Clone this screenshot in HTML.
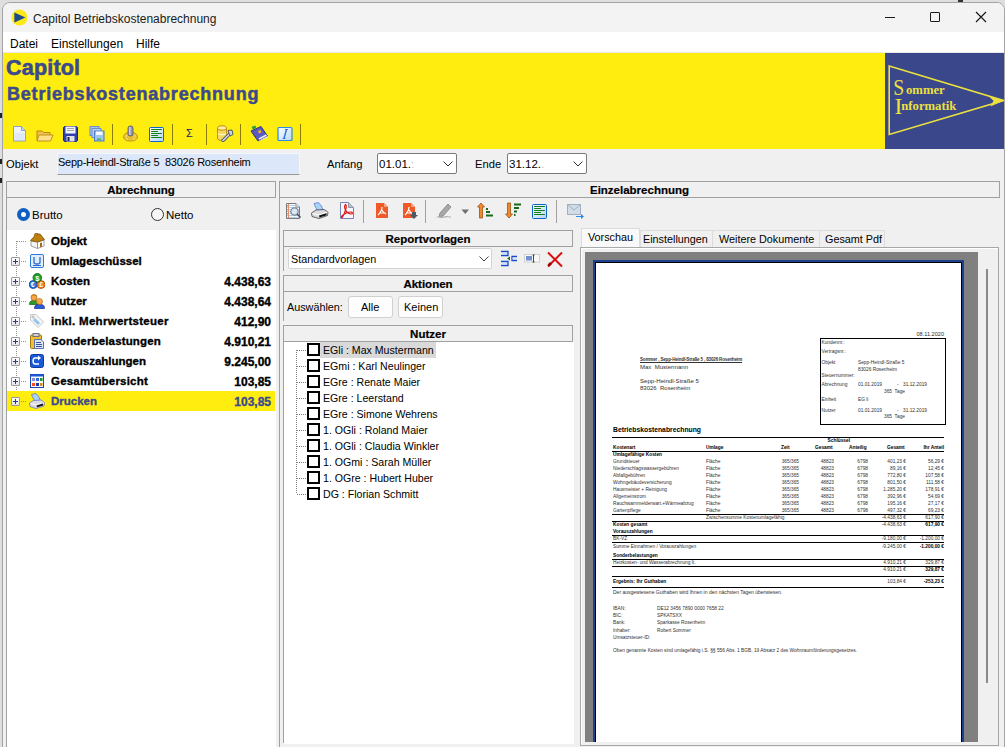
<!DOCTYPE html>
<html><head><meta charset="utf-8">
<style>
*{box-sizing:border-box;margin:0;padding:0}
html,body{width:1005px;height:747px;overflow:hidden;font-family:"Liberation Sans",sans-serif;font-size:11px;color:#000}
body{position:relative;background:#dedede}
.a{position:absolute}
.t{position:absolute;white-space:nowrap;line-height:1;margin-top:0.7px}
#frame{left:2px;top:2px;width:1003px;height:760px;background:#f0f0f0;border:1px solid #a4a4a4;border-radius:8px 8px 0 0}
.hdr{position:absolute;background:#f0f0f0;border:1px solid #a0a0a0;font-weight:bold;text-align:center;line-height:16px;font-size:11.5px;-webkit-text-stroke:0.2px #000}
.vl{position:absolute;width:1px;background:#a0a0a0}
.hl{position:absolute;height:1px;background:#a0a0a0}
.sep{position:absolute;width:1px;background:#8a7a00;top:124px;height:21px}
.sep2{position:absolute;width:1px;background:#a0a0a0;top:200px;height:23px}
</style></head><body>
<div id="frame" class="a"></div>
<div class="a" style="left:0;top:113px;width:2px;height:5px;background:#222"></div>
<div class="a" style="left:0;top:159px;width:2px;height:5px;background:#222"></div>
<div class="a" style="left:0;top:178px;width:2px;height:5px;background:#222"></div>
<div class="a" style="left:958px;top:0;width:5px;height:2px;background:#333"></div>


<!-- TITLE BAR -->
<div class="a" style="left:3px;top:3px;width:1001px;height:29px;background:#f3f3f3;border-radius:7px 7px 0 0"></div>
<svg class="a" style="left:11px;top:9px" width="17" height="17" viewBox="0 0 17 17"><circle cx="8.5" cy="8.5" r="8" fill="#ffe81a"/><path d="M3.3 3.6 L14.5 8.5 L3.3 13.4 Z" fill="#1d4c8c"/></svg>
<div class="t" style="left:33px;top:12px;font-size:12px;color:#1a1a1a">Capitol Betriebskostenabrechnung</div>
<div class="a" style="left:885px;top:17px;width:10px;height:1px;background:#1a1a1a"></div>
<div class="a" style="left:930px;top:12px;width:10px;height:10px;border:1px solid #1a1a1a;border-radius:1px"></div>
<svg class="a" style="left:975px;top:11px" width="12" height="12" viewBox="0 0 12 12"><path d="M1 1 L11 11 M11 1 L1 11" stroke="#1a1a1a" stroke-width="1.2"/></svg>

<!-- MENU -->
<div class="a" style="left:3px;top:32px;width:1001px;height:20px;background:#fff"></div>
<div class="a" style="left:3px;top:52px;width:1001px;height:1px;background:#e8e8e8"></div>
<div class="t" style="left:10px;top:37px;font-size:12px">Datei</div>
<div class="t" style="left:51px;top:37px;font-size:12px">Einstellungen</div>
<div class="t" style="left:136px;top:37px;font-size:12px">Hilfe</div>

<!-- YELLOW HEADER -->
<div class="a" style="left:3px;top:53px;width:882px;height:96px;background:#ffed10"></div>
<div class="t" style="left:6px;top:57px;font-size:21.5px;font-weight:bold;color:#3b4a8c;-webkit-text-stroke:0.6px #3b4a8c;letter-spacing:0.2px">Capitol</div>
<div class="t" style="left:7px;top:84px;font-size:18px;font-weight:bold;letter-spacing:0.8px;color:#3b4a8c;-webkit-text-stroke:0.5px #3b4a8c">Betriebskostenabrechnung</div>

<!-- LOGO -->
<div class="a" style="left:885px;top:53px;width:119px;height:96px;background:#3a478a"></div>
<svg class="a" style="left:886px;top:53px" width="118" height="96" viewBox="0 0 118 96">
 <path d="M3.2 13.1 L117.5 47.5 L3.2 81.5 Z" fill="none" stroke="#ece040" stroke-width="1.6" stroke-linejoin="miter"/>
 <path d="M118 47.5 L103 43.5 L107.5 47.8 L104.5 53.5 Z" fill="#ece040"/>
 <text x="7.2" y="42.4" font-family="Liberation Serif" font-size="23.5" textLength="11" lengthAdjust="spacingAndGlyphs" fill="#ece040">S</text>
 <text x="20" y="41.2" font-family="Liberation Serif" font-size="12.7" font-weight="bold" fill="#ece040">ommer</text>
 <text x="8.4" y="61.3" font-family="Liberation Serif" font-size="23.5" fill="#ece040">I</text>
 <text x="15.3" y="56.8" font-family="Liberation Serif" font-size="12.7" font-weight="bold" fill="#ece040">nformatik</text>
</svg>

<!-- TOOLBAR ICONS (yellow) -->

<svg class="a" style="left:12px;top:125px" width="16" height="17" viewBox="0 0 16 17"><path d="M1.5 1.5 H9.5 L13.5 5.5 V16 H1.5 Z" fill="#eef3fb" stroke="#8da0c0"/><path d="M9.5 1.5 V5.5 H13.5" fill="#c8d4e8" stroke="#8da0c0"/><path d="M2.5 8 H12.5 V15 H2.5Z" fill="#dfe8f6"/></svg>
<svg class="a" style="left:36px;top:129px" width="18" height="13" viewBox="0 0 18 13"><path d="M1 2 H6 L7.5 3.5 H14 V11.5 H1 Z" fill="#f2c14e" stroke="#b8860b"/><path d="M3 6 H17 L14.5 12 H1 Z" fill="#ffe08a" stroke="#c0921a"/></svg>
<svg class="a" style="left:63px;top:126px" width="15" height="16" viewBox="0 0 15 16"><path d="M1.5 0.5 H13.5 L14.5 1.5 V14.5 L13.5 15.5 H1.5 L0.5 14.5 V1.5 Z" fill="#3040b0" stroke="#1c2478"/><rect x="2.5" y="0.5" width="10" height="7" fill="#f4f6fa"/><path d="M4 2.5 H11 M4 4.5 H11" stroke="#a0a4b0"/><rect x="3.5" y="10" width="8" height="5.5" fill="#e0e0e4"/><rect x="4.5" y="11" width="2" height="4" fill="#182060"/></svg>
<svg class="a" style="left:89px;top:126px" width="16" height="16" viewBox="0 0 16 16"><rect x="1" y="0.5" width="9" height="9" fill="#a8c4ec" stroke="#6f8fc8"/><rect x="3" y="2.5" width="9" height="9" fill="#b8d0f0" stroke="#6f8fc8"/><rect x="5.5" y="5" width="9.5" height="10" fill="#a0c4f0" stroke="#4a7ac8"/><rect x="7" y="5.5" width="6.5" height="3.5" fill="#f4f8fc"/><rect x="8" y="12.5" width="4" height="1.5" fill="#50b050"/></svg>
<div class="sep" style="left:112px"></div>
<svg class="a" style="left:122px;top:125px" width="17" height="17" viewBox="0 0 17 17"><path d="M2 10 L4 8 L7 7.5 L10 7.5 L13 8 L15 10 L15.5 13 L13 15.5 L10 16 L7 16 L4 15.5 L1.5 13 Z" fill="#e8c030" stroke="#b89010" stroke-width="0.8"/><path d="M4 13 L6 15 M11 15 L13 13 M3 11 H5 M12 11 H14" stroke="#fff0a0" stroke-width="0.8"/><rect x="6" y="1" width="5" height="10" rx="2.2" fill="#9898a8" stroke="#505060" stroke-width="0.8"/><rect x="7" y="2" width="1.5" height="8" fill="#d0d0dc"/></svg>
<svg class="a" style="left:148px;top:126px" width="17" height="17" viewBox="0 0 17 17"><defs><linearGradient id="lg148" x1="0" y1="0" x2="1" y2="1"><stop offset="0" stop-color="#fff"/><stop offset="1" stop-color="#b4d4f8"/></linearGradient></defs><rect x="1.5" y="1.5" width="14" height="14" rx="1" fill="url(#lg148)" stroke="#0a64d0"/><path d="M3.5 3.5H13.5M3.5 7.5H13.5M3.5 11.5H13.5" stroke="#108010" stroke-width="1.1" stroke-linecap="round"/><path d="M3.5 5.5H9.5M3.5 9.5H9.5" stroke="#108010" stroke-width="1.1" stroke-linecap="round"/></svg>
<div class="sep" style="left:172px"></div>
<div class="t" style="left:186px;top:127px;font-size:11px;color:#1a2060">&Sigma;</div>
<div class="sep" style="left:206px"></div>
<svg class="a" style="left:216px;top:125px" width="18" height="17" viewBox="0 0 18 17"><path d="M1.5 3 V13.5 C1.5 16 10.5 16 10.5 13.5 V3" fill="#f4d860" stroke="#c08a10"/><ellipse cx="6" cy="3" rx="4.5" ry="2.2" fill="#fff0a0" stroke="#c08a10"/><path d="M2 8.5 C2 10 10 10 10 8.5" fill="none" stroke="#fff8d0" stroke-width="1.2"/><path d="M7 15.5 L14.5 8" stroke="#505860" stroke-width="3.2" stroke-linecap="round"/><path d="M7 15.5 L14.5 8" stroke="#d8dce4" stroke-width="1.6" stroke-linecap="round"/><path d="M12 5.5 L16 5 L17 9.5 L14 11 Z" fill="#d0d4dc" stroke="#505860"/></svg>
<div class="sep" style="left:240px"></div>
<svg class="a" style="left:250px;top:125px" width="18" height="17" viewBox="0 0 18 17"><path d="M1 6 L11 1.5 L17.5 11 L8 16 Z" fill="#5a5ac0" stroke="#30307a"/><path d="M8 16 L17.5 11 L17 13 L8.5 16 Z" fill="#e0e0e8"/><path d="M9 14 L16.5 10" stroke="#f0f0f4" stroke-width="1.5"/><rect x="2" y="1" width="4" height="3" fill="#30a030" transform="rotate(-20 4 2.5)"/><path d="M8 6 L10.5 5 L11.5 7.5 L9 8.5 Z" fill="#f0b020"/></svg>
<svg class="a" style="left:277px;top:126px" width="16" height="15" viewBox="0 0 16 15"><defs><linearGradient id="ig" x1="0" y1="0" x2="1" y2="1"><stop offset="0" stop-color="#ffffff"/><stop offset="1" stop-color="#b8d8f8"/></linearGradient></defs><rect x="1" y="1.5" width="14" height="13" rx="1" fill="url(#ig)" stroke="#2a8ae8" stroke-width="1.2"/><path d="M9.5 3.5 L7 12.5" stroke="#3070d8" stroke-width="1.4"/><path d="M8 3.5 H11 M5.5 12.5 H8.5" stroke="#3070d8" stroke-width="0.9"/></svg>
<div class="sep" style="left:300px"></div>


<!-- OBJEKT ROW -->
<div class="t" style="left:6px;top:158px;font-size:11.2px">Objekt</div>
<div class="a" style="left:57px;top:153px;width:243px;height:22px;background:#dce8f9;border:1px solid #f4f8fc;border-bottom:1px solid #9a9a9a"></div>
<div class="t" style="left:58px;top:156px;font-size:11px;letter-spacing:-0.25px">Sepp-Heindl-Straße 5&nbsp; 83026 Rosenheim</div>
<div class="t" style="left:327px;top:158px;font-size:11.2px">Anfang</div>
<div class="a" style="left:377px;top:153px;width:80px;height:21px;background:#fff;border:1px solid #7a7a7a;border-radius:2px"></div>
<div class="t" style="left:379px;top:158px;font-size:11.5px">01.01.<span style="color:#bbb">:</span></div>
<svg class="a" style="left:443px;top:161px" width="10" height="6"><path d="M0.5 0.5 L5 5 L9.5 0.5" fill="none" stroke="#333" stroke-width="1"/></svg>
<div class="t" style="left:475px;top:158px;font-size:11.2px">Ende</div>
<div class="a" style="left:507px;top:153px;width:80px;height:21px;background:#fff;border:1px solid #7a7a7a;border-radius:2px"></div>
<div class="t" style="left:509px;top:158px;font-size:11.5px">31.12.<span style="color:#bbb">.</span></div>
<svg class="a" style="left:573px;top:161px" width="10" height="6"><path d="M0.5 0.5 L5 5 L9.5 0.5" fill="none" stroke="#333" stroke-width="1"/></svg>

<!-- LEFT PANEL -->
<div class="hdr" style="left:6px;top:181px;width:270px;height:17px">Abrechnung</div>
<div class="vl" style="left:6px;top:197px;height:550px"></div>
<div class="a" style="left:7px;top:230px;width:269px;height:517px;background:#fff"></div>
<div class="a" style="left:17px;top:208px;width:13px;height:13px;border-radius:50%;background:#0f5fc2"></div>
<div class="a" style="left:21px;top:212px;width:5px;height:5px;border-radius:50%;background:#fff"></div>
<div class="t" style="left:32px;top:209px;font-size:11.5px">Brutto</div>
<div class="a" style="left:151px;top:208px;width:13px;height:13px;border-radius:50%;border:1px solid #333;background:#f7f7f7"></div>
<div class="t" style="left:166px;top:209px;font-size:11.5px">Netto</div>
<div class="a" style="left:16px;top:241px;width:1px;height:161px;background:repeating-linear-gradient(#909090 0 1px,transparent 1px 2px)"></div>
<div class="a" style="left:7px;top:391px;width:268px;height:20px;background:#ffed10"></div>
<div class="a" style="left:17px;top:241px;width:10px;height:1px;background:repeating-linear-gradient(90deg,#909090 0 1px,transparent 1px 2px)"></div>
<svg class="a" style="left:29px;top:233px" width="16" height="16" viewBox="0 0 16 16"><path d="M2 8 L8.5 9 V15.5 L2 13 Z" fill="#f4f4f4" stroke="#8a8a8a" stroke-width="0.8"/><path d="M8.5 9 L15 7 V13 L8.5 15.5 Z" fill="#fcfcfc" stroke="#8a8a8a" stroke-width="0.8"/><path d="M1.5 7.5 L7 1.5 L11 1 L15.5 6.5 L8.5 9 Z" fill="#c08010" stroke="#7a5000" stroke-width="0.8"/><path d="M5 3 L6 0.5 H9 L8.5 2" fill="#c08010" stroke="#7a5000" stroke-width="0.6"/><path d="M11 10 L13 9.4 V13.5 L11 14.2 Z" fill="#a86a10"/></svg>
<div class="t" style="left:51px;top:235px;font-size:11.5px;font-weight:bold;color:#000;-webkit-text-stroke:0.35px #000">Objekt</div>
<div class="a" style="left:17px;top:261px;width:10px;height:1px;background:repeating-linear-gradient(90deg,#909090 0 1px,transparent 1px 2px)"></div>
<div class="a" style="left:11px;top:257px;width:9px;height:9px;border:1px solid #9a9a9a;border-radius:1px;background:linear-gradient(#fff,#e4e4e4)"></div>
<div class="a" style="left:13px;top:261px;width:5px;height:1px;background:#2a3a80"></div>
<div class="a" style="left:15px;top:259px;width:1px;height:5px;background:#2a3a80"></div>
<svg class="a" style="left:29px;top:253px" width="16" height="16" viewBox="0 0 16 16"><rect x="1.5" y="1.5" width="13" height="13" rx="1.5" fill="#e0eefc" stroke="#2a7ad8"/><path d="M5 4 V9.5 C5 11.5 11 11.5 11 9.5 V4" fill="none" stroke="#2a6ad0" stroke-width="1.3"/><path d="M4 12.5 H12" stroke="#2a6ad0"/></svg>
<div class="t" style="left:51px;top:255px;font-size:11.5px;font-weight:bold;color:#000;-webkit-text-stroke:0.35px #000">Umlageschüssel</div>
<div class="a" style="left:17px;top:281px;width:10px;height:1px;background:repeating-linear-gradient(90deg,#909090 0 1px,transparent 1px 2px)"></div>
<div class="a" style="left:11px;top:277px;width:9px;height:9px;border:1px solid #9a9a9a;border-radius:1px;background:linear-gradient(#fff,#e4e4e4)"></div>
<div class="a" style="left:13px;top:281px;width:5px;height:1px;background:#2a3a80"></div>
<div class="a" style="left:15px;top:279px;width:1px;height:5px;background:#2a3a80"></div>
<svg class="a" style="left:29px;top:273px" width="16" height="16" viewBox="0 0 16 16"><circle cx="4.2" cy="11.5" r="4" fill="#2a78e0" stroke="#0a3a9a" stroke-width="0.8"/><circle cx="12" cy="11.5" r="4" fill="#f08020" stroke="#a84a00" stroke-width="0.8"/><circle cx="8.3" cy="4.8" r="4.3" fill="#20a020" stroke="#0a600a" stroke-width="0.8"/><text x="8.3" y="7.6" font-family="Liberation Sans" font-size="7.5" font-weight="bold" fill="#fff" text-anchor="middle">$</text><text x="3.8" y="14.2" font-family="Liberation Sans" font-size="7" font-weight="bold" fill="#fff" text-anchor="middle">€</text><text x="12.3" y="14.2" font-family="Liberation Sans" font-size="7" font-weight="bold" fill="#fff" text-anchor="middle">£</text></svg>
<div class="t" style="left:51px;top:275px;font-size:11.5px;font-weight:bold;color:#000;-webkit-text-stroke:0.35px #000">Kosten</div>
<div class="t" style="right:734px;top:275px;font-size:12px;font-weight:bold;color:#000;-webkit-text-stroke:0.35px #000">4.438,63</div>
<div class="a" style="left:17px;top:301px;width:10px;height:1px;background:repeating-linear-gradient(90deg,#909090 0 1px,transparent 1px 2px)"></div>
<div class="a" style="left:11px;top:297px;width:9px;height:9px;border:1px solid #9a9a9a;border-radius:1px;background:linear-gradient(#fff,#e4e4e4)"></div>
<div class="a" style="left:13px;top:301px;width:5px;height:1px;background:#2a3a80"></div>
<div class="a" style="left:15px;top:299px;width:1px;height:5px;background:#2a3a80"></div>
<svg class="a" style="left:29px;top:293px" width="16" height="16" viewBox="0 0 16 16"><path d="M0.5 11.5 C0.5 8 2 7.5 5 7.5 C8 7.5 9.5 8 9.5 11.5 Z" fill="#2a9a2a" stroke="#106010" stroke-width="0.7"/><circle cx="5" cy="4.5" r="3" fill="#f8a848" stroke="#a86010" stroke-width="0.7"/><path d="M2 4 C2 1 8 0.5 8 4 L7 2.5 L3 2.5 Z" fill="#b87818"/><path d="M5.5 15.5 C5.5 12 7 11.5 10.5 11.5 C14 11.5 15.5 12 15.5 15.5 Z" fill="#2a5ad8" stroke="#10308a" stroke-width="0.7"/><circle cx="10.5" cy="8.5" r="3" fill="#f8a848" stroke="#a86010" stroke-width="0.7"/><path d="M7.5 8 C7.5 5 13.5 5 13.5 8 L12.5 6.5 L8.5 6.5 Z" fill="#e8c040"/></svg>
<div class="t" style="left:51px;top:295px;font-size:11.5px;font-weight:bold;color:#000;-webkit-text-stroke:0.35px #000">Nutzer</div>
<div class="t" style="right:734px;top:295px;font-size:12px;font-weight:bold;color:#000;-webkit-text-stroke:0.35px #000">4.438,64</div>
<div class="a" style="left:17px;top:321px;width:10px;height:1px;background:repeating-linear-gradient(90deg,#909090 0 1px,transparent 1px 2px)"></div>
<div class="a" style="left:11px;top:317px;width:9px;height:9px;border:1px solid #9a9a9a;border-radius:1px;background:linear-gradient(#fff,#e4e4e4)"></div>
<div class="a" style="left:13px;top:321px;width:5px;height:1px;background:#2a3a80"></div>
<div class="a" style="left:15px;top:319px;width:1px;height:5px;background:#2a3a80"></div>
<svg class="a" style="left:29px;top:313px" width="16" height="16" viewBox="0 0 16 16"><path d="M1.5 1.5 H7 L14.5 9 L9 14.5 L1.5 7 Z" fill="#f4f4f4" stroke="#c8c8c8"/><path d="M6 5 L11 10 L9 12 L4 7 Z" fill="#8cc4f4"/><circle cx="4" cy="4" r="1" fill="none" stroke="#b0b0b0"/></svg>
<div class="t" style="left:51px;top:315px;font-size:11.5px;font-weight:bold;color:#000;-webkit-text-stroke:0.35px #000;letter-spacing:0.3px">inkl. Mehrwertsteuer</div>
<div class="t" style="right:734px;top:315px;font-size:12px;font-weight:bold;color:#000;-webkit-text-stroke:0.35px #000">412,90</div>
<div class="a" style="left:17px;top:341px;width:10px;height:1px;background:repeating-linear-gradient(90deg,#909090 0 1px,transparent 1px 2px)"></div>
<div class="a" style="left:11px;top:337px;width:9px;height:9px;border:1px solid #9a9a9a;border-radius:1px;background:linear-gradient(#fff,#e4e4e4)"></div>
<div class="a" style="left:13px;top:341px;width:5px;height:1px;background:#2a3a80"></div>
<div class="a" style="left:15px;top:339px;width:1px;height:5px;background:#2a3a80"></div>
<svg class="a" style="left:29px;top:333px" width="16" height="16" viewBox="0 0 16 16"><rect x="1.5" y="2" width="11" height="13.5" rx="1" fill="#f0c030" stroke="#a07810"/><rect x="4" y="0.5" width="6" height="3" fill="#d0d0d8" stroke="#707080"/><path d="M5.5 6.5 H12 L14.5 9 V15.5 H5.5 Z" fill="#dce8f8" stroke="#6070b0"/><path d="M7 9.5 H12 M7 11.5 H13 M7 13.5 H13" stroke="#4050a0"/></svg>
<div class="t" style="left:51px;top:335px;font-size:11.5px;font-weight:bold;color:#000;-webkit-text-stroke:0.35px #000;letter-spacing:0.15px">Sonderbelastungen</div>
<div class="t" style="right:734px;top:335px;font-size:12px;font-weight:bold;color:#000;-webkit-text-stroke:0.35px #000">4.910,21</div>
<div class="a" style="left:17px;top:361px;width:10px;height:1px;background:repeating-linear-gradient(90deg,#909090 0 1px,transparent 1px 2px)"></div>
<div class="a" style="left:11px;top:357px;width:9px;height:9px;border:1px solid #9a9a9a;border-radius:1px;background:linear-gradient(#fff,#e4e4e4)"></div>
<div class="a" style="left:13px;top:361px;width:5px;height:1px;background:#2a3a80"></div>
<div class="a" style="left:15px;top:359px;width:1px;height:5px;background:#2a3a80"></div>
<svg class="a" style="left:29px;top:353px" width="16" height="16" viewBox="0 0 16 16"><rect x="1.5" y="1.5" width="13" height="13" rx="2" fill="#1a5ad8" stroke="#0a3aa0"/><path d="M10 5 H6 C3.5 5 3.5 11 6 11 H10" fill="none" stroke="#fff" stroke-width="1.5"/><path d="M9 2.5 L12 5 L9 7.5 Z" fill="#fff"/></svg>
<div class="t" style="left:51px;top:355px;font-size:11.5px;font-weight:bold;color:#000;-webkit-text-stroke:0.35px #000">Vorauszahlungen</div>
<div class="t" style="right:734px;top:355px;font-size:12px;font-weight:bold;color:#000;-webkit-text-stroke:0.35px #000">9.245,00</div>
<div class="a" style="left:17px;top:381px;width:10px;height:1px;background:repeating-linear-gradient(90deg,#909090 0 1px,transparent 1px 2px)"></div>
<div class="a" style="left:11px;top:377px;width:9px;height:9px;border:1px solid #9a9a9a;border-radius:1px;background:linear-gradient(#fff,#e4e4e4)"></div>
<div class="a" style="left:13px;top:381px;width:5px;height:1px;background:#2a3a80"></div>
<div class="a" style="left:15px;top:379px;width:1px;height:5px;background:#2a3a80"></div>
<svg class="a" style="left:29px;top:373px" width="16" height="16" viewBox="0 0 16 16"><rect x="1.5" y="1.5" width="13" height="13" fill="#f8f8f8" stroke="#1a4ab0"/><rect x="1.5" y="1.5" width="13" height="2" fill="#1a5ad8"/><rect x="3" y="5" width="3" height="3" fill="#8a8ad0"/><rect x="7" y="5" width="3" height="3" fill="#2a6ae0"/><rect x="11" y="5" width="2.5" height="3" fill="#1a9a2a"/><rect x="3" y="10" width="3" height="3" fill="#f05020"/><rect x="7" y="10" width="3" height="3" fill="#1a3aa0"/><rect x="11" y="10" width="2.5" height="3" fill="#d09020"/></svg>
<div class="t" style="left:51px;top:375px;font-size:11.5px;font-weight:bold;color:#000;-webkit-text-stroke:0.35px #000;letter-spacing:0.2px">Gesamtübersicht</div>
<div class="t" style="right:734px;top:375px;font-size:12px;font-weight:bold;color:#000;-webkit-text-stroke:0.35px #000">103,85</div>
<div class="a" style="left:17px;top:401px;width:10px;height:1px;background:repeating-linear-gradient(90deg,#909090 0 1px,transparent 1px 2px)"></div>
<div class="a" style="left:11px;top:397px;width:9px;height:9px;border:1px solid #9a9a9a;border-radius:1px;background:linear-gradient(#fff,#e4e4e4)"></div>
<div class="a" style="left:13px;top:401px;width:5px;height:1px;background:#2a3a80"></div>
<div class="a" style="left:15px;top:399px;width:1px;height:5px;background:#2a3a80"></div>
<svg class="a" style="left:29px;top:393px" width="16" height="16" viewBox="0 0 16 16"><path d="M2.5 1.5 L7 0.5 L10 4 L11.5 8 L6 8.5 L3.5 4 Z" fill="#a8d4f8" stroke="#5a6ad0" stroke-width="0.7"/><path d="M0.5 10 L4.5 7.5 L12 7 L15.5 9.5 L15 13 L7 15.5 L1 13.5 Z" fill="#dcdce0" stroke="#5a6ad0" stroke-width="0.7"/><path d="M1.5 10.5 L7.5 12 L15 9.5" fill="none" stroke="#fff" stroke-width="0.8"/><path d="M7.5 12.5 L14 10.5 L14 12.5 L8 14.2 Z" fill="#111"/></svg>
<div class="t" style="left:51px;top:395px;font-size:11.5px;font-weight:bold;color:#3b4a8c;-webkit-text-stroke:0.35px #3b4a8c">Drucken</div>
<div class="t" style="right:734px;top:395px;font-size:12px;font-weight:bold;color:#3b4a8c;-webkit-text-stroke:0.35px #3b4a8c">103,85</div>

<!-- RIGHT PANEL -->
<div class="hdr" style="left:279px;top:181px;width:721px;height:17px">Einzelabrechnung</div>
<div class="vl" style="left:279px;top:197px;height:550px"></div>

<svg class="a" style="left:285px;top:202px" width="17" height="17" viewBox="0 0 17 17"><path d="M1.5 1.5 H11 L14.5 5 V16.5 H1.5 Z" fill="#fafcff" stroke="#7a7a7a"/><path d="M2 3.5H14M2 5.5H14M2 7.5H14M2 9.5H14M2 11.5H14M2 13.5H14M2 15.5H14" stroke="#a8c8ec" stroke-width="0.9"/><path d="M2.5 4 H3.5 M2.5 8 H3.5 M2.5 12 H3.5" stroke="#555"/><path d="M3.5 2 V16" stroke="#e0906a"/><path d="M11 1.5 V5 H14.5" fill="#e8e8e8" stroke="#9a9a9a"/><circle cx="9.5" cy="9.5" r="3.6" fill="#d8e8f8" stroke="#808890" stroke-width="1.3"/><path d="M12 12 L15.5 15.5" stroke="#505050" stroke-width="1.6"/></svg>
<svg class="a" style="left:311px;top:202px" width="18" height="17" viewBox="0 0 18 17"><path d="M3 1.5 L7.5 0.5 L10.5 4 L12 8.5 L6.5 9 L4 4 Z" fill="#a8d4f8" stroke="#5a6ad0" stroke-width="0.7"/><path d="M0.5 11 L5 8 L13 7.5 L17 10 L16.5 13.5 L8 16.5 L1 14.5 Z" fill="#dcdce0" stroke="#404048" stroke-width="0.8"/><path d="M1.5 11.5 L8 13 L16.5 10" fill="none" stroke="#fff" stroke-width="0.9"/><path d="M8 13.5 L15.5 11.2 L15.5 13.3 L8.5 15.5 Z" fill="#111"/></svg>
<svg class="a" style="left:340px;top:202px" width="14" height="17" viewBox="0 0 14 17"><path d="M0.5 0.5 H8.5 L13.5 5.5 V16.5 H0.5 Z" fill="#f4f8fc" stroke="#7a80b8"/><path d="M8.5 0.5 V5.5 H13.5" fill="#b8c0c8" stroke="#9098a8"/><path d="M5.5 2.5 C4.5 3.5 4.5 6 5.5 8 C6.5 10 9 12 11.5 12 C13 12 12.5 10 11 10 C8 10 4 12 2 14 C1 15 1.5 16 2.5 15 C4 13 5 10 5.5 8 C6.5 5 6.5 3 5.5 2.5 Z" fill="none" stroke="#e01818" stroke-width="1.2"/></svg>
<div class="sep2" style="left:363px"></div>
<svg class="a" style="left:376px;top:203px" width="12" height="15" viewBox="0 0 12 15"><path d="M0 0 H8 L12 4 V15 H0 Z" fill="#f05a28"/><path d="M8 0 V4 H12" fill="#f8a080"/><path d="M6 4 C6 7 5 9 2 12 M6 7 C7 9 8 10 10 11 M3 10 H9" fill="none" stroke="#fff" stroke-width="1.2"/></svg>
<svg class="a" style="left:403px;top:203px" width="15" height="16" viewBox="0 0 15 16"><path d="M0 0 H8 L12 4 V15 H0 Z" fill="#f05a28"/><path d="M8 0 V4 H12" fill="#f8a080"/><path d="M6 4 C6 7 5 9 2 12 M6 7 C7 9 8 10 10 11 M3 10 H9" fill="none" stroke="#fff" stroke-width="1.2"/><path d="M9 9 H13 V12 H15 L11 16 L7 12 H9 Z" fill="#4a5a6a"/></svg>
<div class="sep2" style="left:425px"></div>
<svg class="a" style="left:436px;top:202px" width="18" height="17" viewBox="0 0 18 17"><path d="M4 11 L12 2 L15 5 L7 14 L3 15 Z" fill="#a8a8a8" stroke="#909090"/><path d="M1 15.5 C3 13 5 17 8 15 C10 14 12 15 15 15" fill="none" stroke="#b0b0b0" stroke-width="1.2"/></svg>
<svg class="a" style="left:461px;top:209px" width="9" height="6"><path d="M0.5 0.5 H8 L4.25 5 Z" fill="#707070"/></svg>
<svg class="a" style="left:477px;top:202px" width="17" height="17" viewBox="0 0 17 17"><path d="M4 1 L7.5 5 H5.5 V16 H2.5 V5 H0.5 Z" fill="#f08a30" stroke="#a05010" stroke-width="0.8"/><path d="M9 7 H11 M9 10 H13 M9 13.5 H16" stroke="#1a6a1a" stroke-width="2"/></svg>
<svg class="a" style="left:505px;top:202px" width="17" height="17" viewBox="0 0 17 17"><path d="M4 16 L7.5 12 H5.5 V1 H2.5 V12 H0.5 Z" fill="#f08a30" stroke="#a05010" stroke-width="0.8"/><path d="M9 2.5 H16 M9 6 H14 M9 9.5 H12 M9 13 H10.5" stroke="#1a6a1a" stroke-width="2"/></svg>
<svg class="a" style="left:531px;top:203px" width="17" height="17" viewBox="0 0 17 17"><defs><linearGradient id="lg531" x1="0" y1="0" x2="1" y2="1"><stop offset="0" stop-color="#fff"/><stop offset="1" stop-color="#b4d4f8"/></linearGradient></defs><rect x="1.5" y="1.5" width="14" height="14" rx="1" fill="url(#lg531)" stroke="#0a64d0"/><path d="M3.5 3.5H13.5M3.5 7.5H13.5M3.5 11.5H13.5" stroke="#108010" stroke-width="1.1" stroke-linecap="round"/><path d="M3.5 5.5H9.5M3.5 9.5H9.5" stroke="#108010" stroke-width="1.1" stroke-linecap="round"/></svg>
<div class="sep2" style="left:556px"></div>
<svg class="a" style="left:567px;top:204px" width="17" height="15" viewBox="0 0 17 15"><rect x="0.5" y="0.5" width="13" height="10" fill="#d0dce8" stroke="#a0b0c0"/><path d="M0.5 0.5 L7 6 L13.5 0.5" fill="none" stroke="#a0b0c0"/><path d="M9 12 H14 V10 L17 12.5 L14 15 V13 H9Z" fill="#2a8ae8"/></svg>



<!-- Reportvorlagen -->
<div class="hdr" style="left:283px;top:230px;width:290px;height:17px">Reportvorlagen</div>
<div class="vl" style="left:283px;top:246px;height:25px"></div>
<div class="a" style="left:288px;top:248px;width:204px;height:21px;background:#fff;border:1px solid #d4d4d4;border-radius:2px"></div>
<div class="t" style="left:291px;top:253px;font-size:10.8px">Standardvorlagen</div>
<svg class="a" style="left:479px;top:256px" width="10" height="6"><path d="M0.5 0.5 L5 5 L9.5 0.5" fill="none" stroke="#444" stroke-width="1"/></svg>
<svg class="a" style="left:500px;top:250px" width="18" height="17" viewBox="0 0 18 17"><path d="M1 1.5 H8 V5.5 H1" fill="none" stroke="#1a4ac8" stroke-width="1.3"/><path d="M1 11.5 H8 V15.5 H1" fill="none" stroke="#1a4ac8" stroke-width="1.3"/><path d="M17 6.5 H12 V10.5 H17" fill="none" stroke="#1a4ac8" stroke-width="1.3"/><path d="M7 8.5 L10 6.5 V10.5 Z" fill="#1a6a2a"/><rect x="2" y="2.5" width="5" height="2" fill="#cfe0f8"/><rect x="2" y="12.5" width="5" height="2" fill="#cfe0f8"/><rect x="12.5" y="7.5" width="4" height="2" fill="#cfe0f8"/></svg>
<svg class="a" style="left:524px;top:254px" width="17" height="9" viewBox="0 0 17 9"><rect x="0.5" y="0.5" width="15" height="7.5" fill="#f8f8f8" stroke="#d0d0d0"/><rect x="2" y="2" width="6" height="4.5" fill="#7090d0"/><path d="M9.5 1 V8 M8.5 1 H10.5 M8.5 8 H10.5" stroke="#333" stroke-width="0.9"/></svg>
<svg class="a" style="left:546px;top:251px" width="18" height="17" viewBox="0 0 18 17"><path d="M2 1.5 L16 15.5 M16 1.5 L2 15.5" stroke="#d81010" stroke-width="2"/><path d="M2.5 14.5 L5 12" stroke="#900000" stroke-width="2.5"/></svg>

<!-- Aktionen -->
<div class="hdr" style="left:283px;top:275px;width:290px;height:17px">Aktionen</div>
<div class="vl" style="left:283px;top:291px;height:30px"></div>
<div class="t" style="left:287px;top:301px;font-size:10.8px">Auswählen:</div>
<div class="a" style="left:348px;top:296px;width:45px;height:22px;background:#fdfdfd;border:1px solid #d0d0d0;border-radius:3px"></div>
<div class="t" style="left:361px;top:301px;font-size:11px">Alle</div>
<div class="a" style="left:398px;top:296px;width:45px;height:22px;background:#fdfdfd;border:1px solid #d0d0d0;border-radius:3px"></div>
<div class="t" style="left:404px;top:301px;font-size:11px">Keinen</div>

<!-- Nutzer -->
<div class="hdr" style="left:283px;top:325px;width:290px;height:17px">Nutzer</div>
<div class="vl" style="left:283px;top:341px;height:402px"></div>
<div class="a" style="left:284px;top:342px;width:290px;height:402px;background:#fff"></div>
<div class="a" style="left:320px;top:342px;width:116px;height:16px;background:#d9d9d9"></div>
<div class="a" style="left:296px;top:350px;width:1px;height:144px;background:repeating-linear-gradient(#808080 0 1px,transparent 1px 2px)"></div>
<div class="a" style="left:297px;top:350px;width:9px;height:1px;background:repeating-linear-gradient(90deg,#808080 0 1px,transparent 1px 2px)"></div>
<div class="a" style="left:307px;top:343px;width:13px;height:13px;border:2px solid #000;background:#fff"></div>
<div class="t" style="left:323px;top:344px;font-size:10.6px">EGli : Max Mustermann</div>
<div class="a" style="left:297px;top:366px;width:9px;height:1px;background:repeating-linear-gradient(90deg,#808080 0 1px,transparent 1px 2px)"></div>
<div class="a" style="left:307px;top:359px;width:13px;height:13px;border:2px solid #000;background:#fff"></div>
<div class="t" style="left:323px;top:360px;font-size:10.6px">EGmi : Karl Neulinger</div>
<div class="a" style="left:297px;top:382px;width:9px;height:1px;background:repeating-linear-gradient(90deg,#808080 0 1px,transparent 1px 2px)"></div>
<div class="a" style="left:307px;top:375px;width:13px;height:13px;border:2px solid #000;background:#fff"></div>
<div class="t" style="left:323px;top:376px;font-size:10.6px">EGre : Renate Maier</div>
<div class="a" style="left:297px;top:398px;width:9px;height:1px;background:repeating-linear-gradient(90deg,#808080 0 1px,transparent 1px 2px)"></div>
<div class="a" style="left:307px;top:391px;width:13px;height:13px;border:2px solid #000;background:#fff"></div>
<div class="t" style="left:323px;top:392px;font-size:10.6px">EGre : Leerstand</div>
<div class="a" style="left:297px;top:414px;width:9px;height:1px;background:repeating-linear-gradient(90deg,#808080 0 1px,transparent 1px 2px)"></div>
<div class="a" style="left:307px;top:407px;width:13px;height:13px;border:2px solid #000;background:#fff"></div>
<div class="t" style="left:323px;top:408px;font-size:10.6px">EGre : Simone Wehrens</div>
<div class="a" style="left:297px;top:430px;width:9px;height:1px;background:repeating-linear-gradient(90deg,#808080 0 1px,transparent 1px 2px)"></div>
<div class="a" style="left:307px;top:423px;width:13px;height:13px;border:2px solid #000;background:#fff"></div>
<div class="t" style="left:323px;top:424px;font-size:10.6px">1. OGli : Roland Maier</div>
<div class="a" style="left:297px;top:446px;width:9px;height:1px;background:repeating-linear-gradient(90deg,#808080 0 1px,transparent 1px 2px)"></div>
<div class="a" style="left:307px;top:439px;width:13px;height:13px;border:2px solid #000;background:#fff"></div>
<div class="t" style="left:323px;top:440px;font-size:10.6px">1. OGli : Claudia Winkler</div>
<div class="a" style="left:297px;top:462px;width:9px;height:1px;background:repeating-linear-gradient(90deg,#808080 0 1px,transparent 1px 2px)"></div>
<div class="a" style="left:307px;top:455px;width:13px;height:13px;border:2px solid #000;background:#fff"></div>
<div class="t" style="left:323px;top:456px;font-size:10.6px">1. OGmi : Sarah Müller</div>
<div class="a" style="left:297px;top:478px;width:9px;height:1px;background:repeating-linear-gradient(90deg,#808080 0 1px,transparent 1px 2px)"></div>
<div class="a" style="left:307px;top:471px;width:13px;height:13px;border:2px solid #000;background:#fff"></div>
<div class="t" style="left:323px;top:472px;font-size:10.6px">1. OGre : Hubert Huber</div>
<div class="a" style="left:297px;top:494px;width:9px;height:1px;background:repeating-linear-gradient(90deg,#808080 0 1px,transparent 1px 2px)"></div>
<div class="a" style="left:307px;top:487px;width:13px;height:13px;border:2px solid #000;background:#fff"></div>
<div class="t" style="left:323px;top:488px;font-size:10.6px">DG : Florian Schmitt</div>


<!-- TABS -->
<div class="a" style="left:580px;top:247px;width:419px;height:499px;border:1px solid #a8a8a8;background:#f0f0f0"></div>
<div class="a" style="left:581px;top:248px;width:417px;height:1px;background:#fff"></div>
<div class="a" style="left:581px;top:248px;width:1px;height:496px;background:#fff"></div>
<div class="a" style="left:640px;top:230px;width:73px;height:17px;background:#f0f0f0;border:1px solid #dcdcdc;border-bottom:none"></div>
<div class="a" style="left:712px;top:230px;width:108px;height:17px;background:#f0f0f0;border:1px solid #dcdcdc;border-bottom:none"></div>
<div class="a" style="left:819px;top:230px;width:66px;height:17px;background:#f0f0f0;border:1px solid #dcdcdc;border-bottom:none"></div>
<div class="a" style="left:581px;top:228px;width:59px;height:19px;background:#f9f9f9;border:1px solid #dcdcdc;border-bottom:none"></div>
<div class="t" style="left:588px;top:231px;font-size:10.8px">Vorschau</div>
<div class="t" style="left:643px;top:233px;font-size:10.8px">Einstellungen</div>
<div class="t" style="left:719px;top:233px;font-size:10.8px">Weitere Dokumente</div>
<div class="t" style="left:825px;top:233px;font-size:10.8px">Gesamt Pdf</div>
<div class="a" style="left:585px;top:252px;width:393px;height:490px;background:#808080"></div>
<div class="a" style="left:593px;top:260px;width:371px;height:482px;background:#1f3f8f"></div>
<div class="a" style="left:595px;top:262px;width:367px;height:480px;background:#000"></div>
<div class="a" style="left:596px;top:263px;width:365px;height:479px;background:#fff"></div>
<div class="a" style="left:986px;top:269px;width:2px;height:414px;background:#8a8a8a"></div>

<div style="position:absolute;left:0;top:0;width:1005px;height:747px;color:#000">
<div class="t" style="right:61px;top:331.8px;font-size:5.6px;color:#303030;">08.11.2020</div>
<div class="a" style="left:820px;top:338px;width:126px;height:87px;border:1.3px solid #000"></div>
<div class="t" style="left:821.5px;top:340.0px;font-size:4.8px;color:#303030;">Kundennr.:</div>
<div class="t" style="left:821.5px;top:349.1px;font-size:4.8px;color:#303030;">Vertragsnr.:</div>
<div class="t" style="left:821.5px;top:359.9px;font-size:4.8px;color:#303030;">Objekt</div>
<div class="t" style="left:821.5px;top:373.7px;font-size:4.8px;color:#303030;">Steuernummer:</div>
<div class="t" style="left:821.5px;top:381.9px;font-size:4.8px;color:#303030;">Abrechnung</div>
<div class="t" style="left:821.5px;top:397.7px;font-size:4.8px;color:#303030;">Einheit</div>
<div class="t" style="left:821.5px;top:408.0px;font-size:4.8px;color:#303030;">Nutzer</div>
<div class="t" style="left:858px;top:359.9px;font-size:4.8px;color:#303030;">Sepp-Heindl-Straße 5</div>
<div class="t" style="left:858px;top:367.1px;font-size:4.8px;color:#303030;">83026 Rosenheim</div>
<div class="t" style="left:858px;top:381.9px;font-size:4.8px;color:#303030;">01.01.2019</div>
<div class="t" style="left:897px;top:381.9px;font-size:4.8px;color:#303030;">-</div>
<div class="t" style="left:903px;top:381.9px;font-size:4.8px;color:#303030;">31.12.2019</div>
<div class="t" style="left:884px;top:388.9px;font-size:4.8px;color:#303030;">365&nbsp; Tage</div>
<div class="t" style="left:858px;top:397.7px;font-size:4.8px;color:#303030;">EG li</div>
<div class="t" style="left:858px;top:408.0px;font-size:4.8px;color:#303030;">01.01.2019</div>
<div class="t" style="left:897px;top:408.0px;font-size:4.8px;color:#303030;">-</div>
<div class="t" style="left:903px;top:408.0px;font-size:4.8px;color:#303030;">31.12.2019</div>
<div class="t" style="left:884px;top:414.8px;font-size:4.8px;color:#303030;">365&nbsp; Tage</div>
<div class="t" style="left:640px;top:357.3px;font-size:4.5px;font-weight:bold;text-decoration:underline;text-decoration-thickness:0.6px;letter-spacing:-0.15px;color:#333">Sommer , Sepp-Heindl-Straße 5 , 83026 Rosenheim</div>
<div class="t" style="left:640px;top:363.6px;font-size:6px;color:#303030;">Max&nbsp; Mustermann</div>
<div class="t" style="left:640px;top:377.1px;font-size:6.1px;color:#303030;">Sepp-Heindl-Straße 5</div>
<div class="t" style="left:640px;top:384.1px;font-size:6px;color:#303030;">83026&nbsp; Rosenheim</div>
<div class="t" style="left:613px;top:426.0px;font-size:6.8px;font-weight:bold;color:#000">Betriebskostenabrechnung</div>
<div class="a" style="left:612px;top:437px;width:332px;height:1px;background:#000"></div>
<div class="t" style="left:827.6px;top:437.9px;font-size:4.8px;font-weight:bold;">Schlüssel</div>
<div class="t" style="left:613px;top:445.1px;font-size:4.8px;font-weight:bold;">Kostenart</div>
<div class="t" style="left:706px;top:445.1px;font-size:4.8px;font-weight:bold;">Umlage</div>
<div class="t" style="left:781px;top:445.1px;font-size:4.8px;font-weight:bold;">Zeit</div>
<div class="t" style="left:815px;top:445.1px;font-size:4.8px;font-weight:bold;">Gesamt</div>
<div class="t" style="left:849px;top:445.1px;font-size:4.8px;font-weight:bold;">Anteilig</div>
<div class="t" style="left:887px;top:445.1px;font-size:4.8px;font-weight:bold;">Gesamt</div>
<div class="t" style="right:61px;top:445.1px;font-size:4.8px;font-weight:bold;">Ihr Anteil</div>
<div class="a" style="left:612px;top:451px;width:332px;height:1px;background:#000"></div>
<div class="t" style="left:613px;top:451.9px;font-size:4.8px;font-weight:bold;">Umlagefähige Kosten</div>
<div class="t" style="left:613px;top:459.1px;font-size:4.8px;color:#303030;">Grundsteuer</div>
<div class="t" style="left:706px;top:459.1px;font-size:4.8px;color:#303030;">Fläche</div>
<div class="t" style="right:206px;top:459.1px;font-size:4.8px;color:#303030;">365/365</div>
<div class="t" style="right:171px;top:459.1px;font-size:4.8px;color:#303030;">48823</div>
<div class="t" style="right:137px;top:459.1px;font-size:4.8px;color:#303030;">6798</div>
<div class="t" style="right:99px;top:459.1px;font-size:4.8px;color:#303030;">401,23 €</div>
<div class="t" style="right:61px;top:459.1px;font-size:4.8px;color:#303030;">56,29 €</div>
<div class="t" style="left:613px;top:466.1px;font-size:4.8px;color:#303030;">Niederschlagswassergebühren</div>
<div class="t" style="left:706px;top:466.1px;font-size:4.8px;color:#303030;">Fläche</div>
<div class="t" style="right:206px;top:466.1px;font-size:4.8px;color:#303030;">365/365</div>
<div class="t" style="right:171px;top:466.1px;font-size:4.8px;color:#303030;">48823</div>
<div class="t" style="right:137px;top:466.1px;font-size:4.8px;color:#303030;">6798</div>
<div class="t" style="right:99px;top:466.1px;font-size:4.8px;color:#303030;">89,16 €</div>
<div class="t" style="right:61px;top:466.1px;font-size:4.8px;color:#303030;">12,45 €</div>
<div class="t" style="left:613px;top:473.1px;font-size:4.8px;color:#303030;">Abfallgebühren</div>
<div class="t" style="left:706px;top:473.1px;font-size:4.8px;color:#303030;">Fläche</div>
<div class="t" style="right:206px;top:473.1px;font-size:4.8px;color:#303030;">365/365</div>
<div class="t" style="right:171px;top:473.1px;font-size:4.8px;color:#303030;">48823</div>
<div class="t" style="right:137px;top:473.1px;font-size:4.8px;color:#303030;">6798</div>
<div class="t" style="right:99px;top:473.1px;font-size:4.8px;color:#303030;">772,80 €</div>
<div class="t" style="right:61px;top:473.1px;font-size:4.8px;color:#303030;">107,58 €</div>
<div class="t" style="left:613px;top:480.1px;font-size:4.8px;color:#303030;">Wohngebäudeversicherung</div>
<div class="t" style="left:706px;top:480.1px;font-size:4.8px;color:#303030;">Fläche</div>
<div class="t" style="right:206px;top:480.1px;font-size:4.8px;color:#303030;">365/365</div>
<div class="t" style="right:171px;top:480.1px;font-size:4.8px;color:#303030;">48823</div>
<div class="t" style="right:137px;top:480.1px;font-size:4.8px;color:#303030;">6798</div>
<div class="t" style="right:99px;top:480.1px;font-size:4.8px;color:#303030;">801,50 €</div>
<div class="t" style="right:61px;top:480.1px;font-size:4.8px;color:#303030;">111,58 €</div>
<div class="t" style="left:613px;top:487.1px;font-size:4.8px;color:#303030;">Hausmeister + Reinigung</div>
<div class="t" style="left:706px;top:487.1px;font-size:4.8px;color:#303030;">Fläche</div>
<div class="t" style="right:206px;top:487.1px;font-size:4.8px;color:#303030;">365/365</div>
<div class="t" style="right:171px;top:487.1px;font-size:4.8px;color:#303030;">48823</div>
<div class="t" style="right:137px;top:487.1px;font-size:4.8px;color:#303030;">6798</div>
<div class="t" style="right:99px;top:487.1px;font-size:4.8px;color:#303030;">1.285,20 €</div>
<div class="t" style="right:61px;top:487.1px;font-size:4.8px;color:#303030;">178,91 €</div>
<div class="t" style="left:613px;top:494.1px;font-size:4.8px;color:#303030;">Allgemeinstrom</div>
<div class="t" style="left:706px;top:494.1px;font-size:4.8px;color:#303030;">Fläche</div>
<div class="t" style="right:206px;top:494.1px;font-size:4.8px;color:#303030;">365/365</div>
<div class="t" style="right:171px;top:494.1px;font-size:4.8px;color:#303030;">48823</div>
<div class="t" style="right:137px;top:494.1px;font-size:4.8px;color:#303030;">6798</div>
<div class="t" style="right:99px;top:494.1px;font-size:4.8px;color:#303030;">392,96 €</div>
<div class="t" style="right:61px;top:494.1px;font-size:4.8px;color:#303030;">54,69 €</div>
<div class="t" style="left:613px;top:501.1px;font-size:4.8px;color:#303030;">Rauchwarnmelderwart.+Wärmeabzug</div>
<div class="t" style="left:706px;top:501.1px;font-size:4.8px;color:#303030;">Fläche</div>
<div class="t" style="right:206px;top:501.1px;font-size:4.8px;color:#303030;">365/365</div>
<div class="t" style="right:171px;top:501.1px;font-size:4.8px;color:#303030;">48823</div>
<div class="t" style="right:137px;top:501.1px;font-size:4.8px;color:#303030;">6798</div>
<div class="t" style="right:99px;top:501.1px;font-size:4.8px;color:#303030;">195,16 €</div>
<div class="t" style="right:61px;top:501.1px;font-size:4.8px;color:#303030;">27,17 €</div>
<div class="t" style="left:613px;top:508.1px;font-size:4.8px;color:#303030;">Gartenpflege</div>
<div class="t" style="left:706px;top:508.1px;font-size:4.8px;color:#303030;">Fläche</div>
<div class="t" style="right:206px;top:508.1px;font-size:4.8px;color:#303030;">365/365</div>
<div class="t" style="right:171px;top:508.1px;font-size:4.8px;color:#303030;">48823</div>
<div class="t" style="right:137px;top:508.1px;font-size:4.8px;color:#303030;">6798</div>
<div class="t" style="right:99px;top:508.1px;font-size:4.8px;color:#303030;">497,32 €</div>
<div class="t" style="right:61px;top:508.1px;font-size:4.8px;color:#303030;">69,23 €</div>
<div class="a" style="left:612px;top:514px;width:332px;height:1px;background:#000"></div>
<div class="t" style="left:706px;top:515.2px;font-size:4.8px;color:#303030;">Zwischensumme Kostenumlagefähig</div>
<div class="t" style="right:99px;top:515.2px;font-size:4.8px;color:#303030;">-4.438,63 €</div>
<div class="t" style="right:61px;top:515.2px;font-size:4.8px;color:#303030;">617,90 €</div>
<div class="a" style="left:612px;top:521px;width:332px;height:1px;background:#000"></div>
<div class="t" style="left:613px;top:522.8px;font-size:4.8px;font-weight:bold;">Kosten gesamt</div>
<div class="t" style="right:99px;top:522.8px;font-size:4.8px;color:#303030;">-4.438,63 €</div>
<div class="t" style="right:61px;top:522.8px;font-size:4.8px;font-weight:bold;">617,90 €</div>
<div class="t" style="left:613px;top:529.2px;font-size:4.8px;font-weight:bold;">Vorauszahlungen</div>
<div class="a" style="left:612px;top:535px;width:332px;height:1px;background:#000"></div>
<div class="t" style="left:613px;top:536.0px;font-size:4.8px;color:#303030;">BK-VZ</div>
<div class="t" style="right:99px;top:536.0px;font-size:4.8px;color:#303030;">-9.180,00 €</div>
<div class="t" style="right:61px;top:536.0px;font-size:4.8px;color:#303030;">-1.200,00 €</div>
<div class="a" style="left:612px;top:542px;width:332px;height:1px;background:#000"></div>
<div class="t" style="left:613px;top:544.1px;font-size:4.8px;color:#303030;">Summe Einnahmen / Vorauszahlungen</div>
<div class="t" style="right:99px;top:544.1px;font-size:4.8px;color:#303030;">-9.245,00 €</div>
<div class="t" style="right:61px;top:544.1px;font-size:4.8px;font-weight:bold;">-1.200,00 €</div>
<div class="t" style="left:613px;top:553.0px;font-size:4.8px;font-weight:bold;">Sonderbelastungen</div>
<div class="a" style="left:612px;top:559px;width:332px;height:1px;background:#000"></div>
<div class="t" style="left:613px;top:560.2px;font-size:4.8px;color:#303030;">Heizkosten- und Wasserabrechnung lt.</div>
<div class="t" style="right:99px;top:560.2px;font-size:4.8px;color:#303030;">4.910,21 €</div>
<div class="t" style="right:61px;top:560.2px;font-size:4.8px;color:#303030;">329,87 €</div>
<div class="a" style="left:612px;top:566px;width:332px;height:1px;background:#000"></div>
<div class="t" style="right:99px;top:567.2px;font-size:4.8px;color:#303030;">4.910,21 €</div>
<div class="t" style="right:61px;top:567.2px;font-size:4.8px;font-weight:bold;">329,87 €</div>
<div class="a" style="left:612px;top:576px;width:332px;height:1px;background:#000"></div>
<div class="t" style="left:613px;top:579.0px;font-size:4.8px;font-weight:bold;">Ergebnis: Ihr Guthaben</div>
<div class="t" style="right:99px;top:579.0px;font-size:4.8px;color:#303030;">103,84 €</div>
<div class="t" style="right:61px;top:579.0px;font-size:4.8px;font-weight:bold;">-253,23 €</div>
<div class="a" style="left:612px;top:587px;width:332px;height:1px;background:#000"></div>
<div class="t" style="left:613px;top:589.1px;font-size:5px;color:#303030;">Der ausgewiesene Guthaben wird Ihnen in den nächsten Tagen überwiesen.</div>
<div class="t" style="left:613px;top:606.3px;font-size:4.8px;color:#303030;">IBAN:</div>
<div class="t" style="left:657px;top:606.3px;font-size:4.8px;color:#303030;">DE12 3456 7890 0000 7658 22</div>
<div class="t" style="left:613px;top:613.5px;font-size:4.8px;color:#303030;">BIC:</div>
<div class="t" style="left:657px;top:613.5px;font-size:4.8px;color:#303030;">SPKATSXX</div>
<div class="t" style="left:613px;top:620.7px;font-size:4.8px;color:#303030;">Bank:</div>
<div class="t" style="left:657px;top:620.7px;font-size:4.8px;color:#303030;">Sparkasse Rosenheim</div>
<div class="t" style="left:613px;top:627.9px;font-size:4.8px;color:#303030;">Inhaber:</div>
<div class="t" style="left:657px;top:627.9px;font-size:4.8px;color:#303030;">Robert Sommer</div>
<div class="t" style="left:613px;top:635.1px;font-size:4.8px;color:#303030;">Umsatzsteuer-ID:</div>
<div class="t" style="left:657px;top:635.1px;font-size:4.8px;color:#303030;"></div>
<div class="t" style="left:613px;top:648.6px;font-size:4.83px;color:#303030;">Oben genannte Kosten sind umlagefähig i.S. §§ 556 Abs. 1 BGB, 19 Absatz 2 des Wohnraumförderungsgesetzes.</div>
</div>
</body></html>
